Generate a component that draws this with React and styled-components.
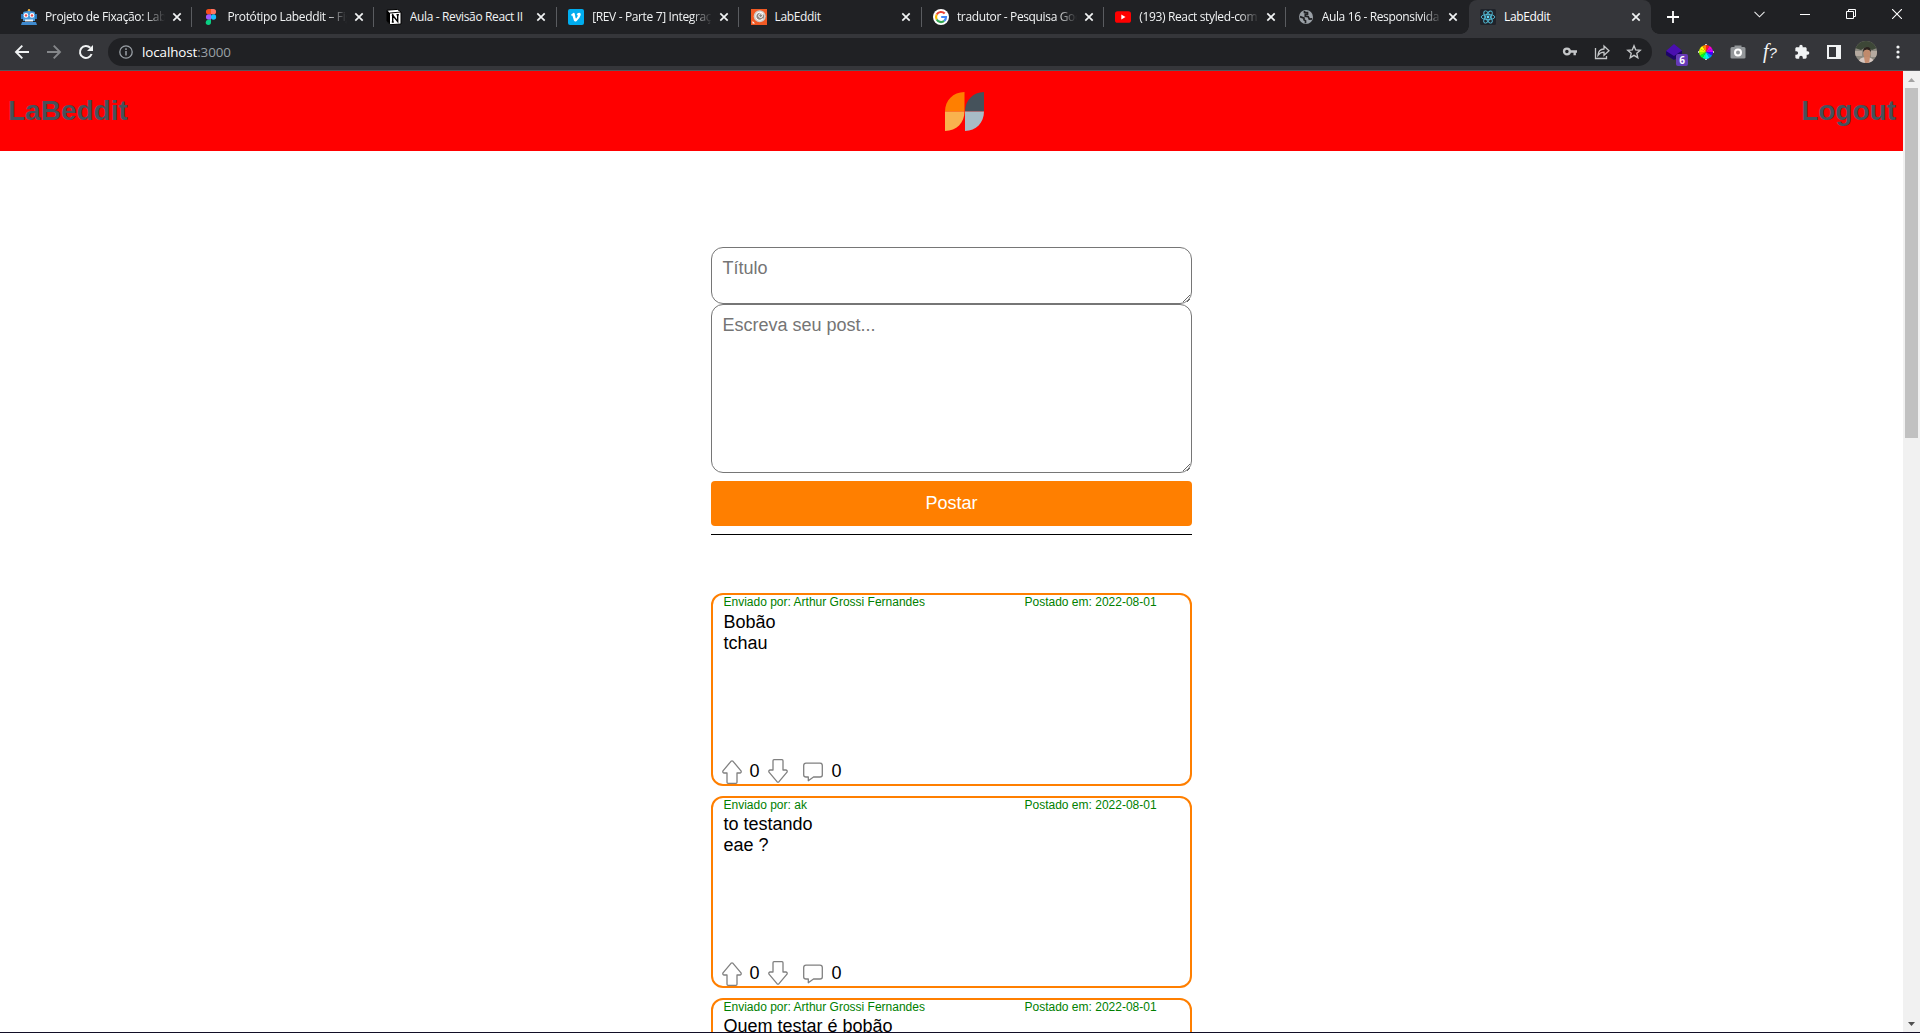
import React from "react";
import styled, { createGlobalStyle } from "styled-components";

const GlobalStyle = createGlobalStyle`
  * { box-sizing: border-box; }
  html, body { margin: 0; padding: 0; overflow: hidden; background: #fff; }
  body { font-family: Arial, "Liberation Sans", sans-serif; color: #000; }
  svg { display: block; flex: none; }
`;

const Window = styled.div`
  display: flex;
  flex-direction: column;
  width: 1920px;
  height: 1033px;
  overflow: hidden;
  border-bottom: 1px solid #120e26;
`;

/* ---------- browser chrome ---------- */

const TabStrip = styled.div`
  display: flex;
  flex: none;
  height: 34px;
  padding-left: 9.6px;
  background: #202124;
  font-family: "Segoe UI", "Open Sans", sans-serif;
`;

const Tab = styled.div`
  display: flex;
  align-items: center;
  position: relative;
  width: 182.4px;
  height: 34px;
  padding: 0 10.4px 0 11.4px;
  color: ${(p) => (p.$active ? "#fff" : "#f1f3f4")};
  background: ${(p) => (p.$active ? "#35363a" : "transparent")};
  border-radius: 8px 8px 0 0;
  &::before, &::after {
    content: "";
    display: ${(p) => (p.$active ? "block" : "none")};
    position: absolute;
    bottom: 0;
    width: 8px;
    height: 8px;
  }
  &::before { left: -8px; background: radial-gradient(circle at 0 0, #202124 7.5px, #35363a 8px); }
  &::after { right: -8px; background: radial-gradient(circle at 100% 0, #202124 7.5px, #35363a 8px); }
`;

const Divider = styled.i`
  position: absolute;
  right: 0;
  top: 7px;
  width: 1px;
  height: 20px;
  background: #5a5c60;
`;

const TabTitle = styled.span`
  width: 120px;
  margin-left: 8px;
  overflow: hidden;
  white-space: nowrap;
  font-size: 12px;
  line-height: 18px;
  letter-spacing: -0.36px;
  mask-image: ${(p) => (p.$fade ? "linear-gradient(to right, #000 100px, transparent 120px)" : "none")};
`;

const TabClose = styled.span`
  display: flex;
  margin-left: auto;
`;

const NewTab = styled.div`
  display: flex;
  align-items: center;
  margin-left: 15.5px;
`;

const WindowButtons = styled.div`
  display: flex;
  height: 28px;
  margin-left: auto;
`;

const WindowButton = styled.div`
  display: flex;
  align-items: center;
  justify-content: center;
  width: 46px;
`;

const Toolbar = styled.div`
  display: flex;
  align-items: center;
  flex: none;
  height: 37px;
  padding: 0 0 1px 14px;
  background: #35363a;
  border-bottom: 1px solid #55585c;
  font-family: "Segoe UI", "Open Sans", sans-serif;
`;

const NavButtons = styled.div`
  display: flex;
  width: 94px;
  gap: 16px;
`;

const AddressBar = styled.div`
  display: flex;
  align-items: center;
  width: 1544px;
  height: 28px;
  padding: 0 10px 0 11px;
  background: #202124;
  border-radius: 14px;
`;

const Address = styled.span`
  margin-left: 9px;
  font-size: 13.4px;
  line-height: 20px;
  letter-spacing: -0.1px;
  color: #fff;
  em { font-style: normal; color: #9aa0a6; }
`;

const AddressActions = styled.div`
  display: flex;
  gap: 16px;
  margin-left: auto;
`;

const Extensions = styled.div`
  display: flex;
  align-items: center;
  margin-left: 6px;
`;

const Extension = styled.div`
  display: flex;
  align-items: center;
  justify-content: center;
  position: relative;
  width: 32px;
  height: 28px;
`;

const Badge = styled.span`
  position: absolute;
  left: 18px;
  top: 16px;
  width: 12px;
  height: 12px;
  border-radius: 2px;
  background: #673ab7;
  color: #fff;
  font-size: 10px;
  font-weight: 700;
  line-height: 12px;
  text-align: center;
`;

const FnMark = styled.span`
  font-family: "Liberation Serif", serif;
  font-style: italic;
  font-size: 20px;
  line-height: 20px;
  color: #f1f3f4;
  b { font-family: "Liberation Sans", sans-serif; font-size: 15px; font-weight: 400; }
`;

/* ---------- page ---------- */

const Viewport = styled.div`
  display: flex;
  flex: 1;
  min-height: 0;
`;

const Page = styled.main`
  display: flex;
  flex-direction: column;
  align-items: center;
  width: 1903px;
  overflow: hidden;
  background: #fff;
`;

const Header = styled.header`
  display: grid;
  grid-template-columns: 1fr auto 1fr;
  align-items: center;
  flex: none;
  width: 100%;
  height: 80px;
  padding: 0 7px 0 8px;
  background: #ff0000;
`;

const HeaderTitle = styled.h1`
  margin: 0;
  font-size: 28px;
  line-height: 32px;
  color: #45525b;
  text-align: ${(p) => p.$align || "left"};
`;

const LogoBox = styled.div`
  padding: 1px 0 0 25px;
`;

const Feed = styled.div`
  display: flex;
  flex-direction: column;
  flex: none;
  width: 481px;
  padding-top: 96px;
`;

const Field = styled.textarea`
  display: block;
  width: 100%;
  height: ${(p) => p.$height}px;
  margin: 0;
  padding: 10px 10px 10px 10.5px;
  border: 1px solid #767676;
  border-radius: 12px;
  font: 18px/20px Arial, "Liberation Sans", sans-serif;
  background: #fff;
  &::placeholder { color: #757575; }
`;

const PostButton = styled.button`
  height: 45px;
  margin: 8px 0;
  padding: 0 0 1px;
  border: 0;
  border-radius: 4px;
  background: #ff7f00;
  color: #fff;
  font: 18px/21px Arial, "Liberation Sans", sans-serif;
`;

const Rule = styled.hr`
  width: 100%;
  height: 1px;
  margin: 0 0 58.2px;
  border: 0;
  background: #000;
`;

const Card = styled.article`
  display: flex;
  flex-direction: column;
  height: 192.4px;
  margin-bottom: 10px;
  padding: 0 10px 0 10.5px;
  border: 2px solid #ff7f00;
  border-radius: 12px;
`;

const Meta = styled.div`
  display: flex;
  font-size: 12px;
  line-height: 14px;
  color: #008000;
`;

const Sender = styled.span`
  width: 301px;
`;

const Text = styled.p`
  margin: 0;
  font-size: 18px;
  line-height: 21px;
`;

const Title = styled(Text)`
  margin-top: 2.4px;
`;

const Actions = styled.div`
  display: flex;
  align-items: flex-end;
  height: 24px;
  margin: auto 0 0 -2px;
`;

const Count = styled.span`
  width: ${(p) => p.$width}px;
  padding-left: ${(p) => p.$indent}px;
  font-size: 18px;
  line-height: 22px;
  margin-bottom: 2px;
`;

const IconSlot = styled.span`
  margin-bottom: ${(p) => p.$lift || 0}px;
`;

const Scrollbar = styled.div`
  display: flex;
  flex-direction: column;
  align-items: center;
  width: 17px;
  background: #f1f1f1;
`;

const ScrollArrow = styled.div`
  display: flex;
  align-items: center;
  justify-content: center;
  height: 17px;
  margin-top: ${(p) => (p.$end ? "auto" : 0)};
`;

const Thumb = styled.div`
  width: 13px;
  height: 350px;
  background: #c1c1c1;
`;

/* ---------- icons ---------- */

const favicons = {
  robot: (
    <svg width="16" height="16" viewBox="0 0 16 16">
      <circle cx="8" cy="1.2" r="1.2" fill="#f6b73c" />
      <path d="M2 3.5Q3 2 8 2T14 3.5V12H2Z" fill="#4a9bdc" />
      <path d="M0 5h2v5H0ZM14 5h2v5h-2Z" fill="#2b78ba" />
      <circle cx="5" cy="6.4" r="2.3" fill="#fff" /><circle cx="11" cy="6.4" r="2.3" fill="#fff" />
      <circle cx="5" cy="6.4" r="1.2" fill="#e84a4a" /><circle cx="11" cy="6.4" r="1.2" fill="#e84a4a" />
      <path d="M4 10.5h8v2H4Z" fill="#e8f2fa" /><path d="M1 13h14l1 3H0Z" fill="#3f8bd0" />
    </svg>
  ),
  figma: (
    <svg width="16" height="16" viewBox="0 0 16 16">
      <path d="M8 0v5.33H5.6a2.66 2.66 0 0 1 0-5.33Z" fill="#f24e1e" />
      <path d="M8 0h2.4a2.66 2.66 0 0 1 0 5.33H8Z" fill="#ff7262" />
      <path d="M8 5.33v5.34H5.6a2.66 2.66 0 0 1 0-5.34Z" fill="#a259ff" />
      <circle cx="10.5" cy="8" r="2.66" fill="#1abcfe" />
      <path d="M5.6 10.67H8v2.6a2.66 2.66 0 1 1-2.4-2.6Z" fill="#0acf83" />
    </svg>
  ),
  notion: (
    <svg width="16" height="16" viewBox="0 0 16 16">
      <path d="M1 1.2 11.5.4 15 3v12l-11 .7L1 12Z" fill="#fff" stroke="#000" />
      <path d="M1 1.2 4 4v11.7L1 12Z" fill="#000" /><path d="M4 4 15 3" stroke="#000" />
      <path d="M6.7 13V6.3l5 6.2V5.7M5.8 6.2h2M10.5 5.7h2.4M5.8 13h2" fill="none" stroke="#000" strokeWidth="1.4" />
    </svg>
  ),
  vimeo: (
    <svg width="16" height="16" viewBox="0 0 16 16">
      <rect width="16" height="16" rx="2" fill="#00adef" />
      <path d="M3 5.8 5.2 4q1.2-.7 1.6 1.1L7.6 9q.4 1 1.2-.2 1.6-2.4.7-2.9-.4-.2-1 .1Q9.3 3.6 11.3 3.7q2 .1 1.4 2.4-.8 3.2-4.3 6.1-1.6 1.1-2.5-.7L4.6 7.2q-.3-1-1.1-.4Z" fill="#fff" />
    </svg>
  ),
  lab: (
    <svg width="16" height="16" viewBox="0 0 16 16">
      <rect width="16" height="16" fill="#f15a24" />
      <circle cx="8.7" cy="7.2" r="6" fill="#cfcbc8" />
      <circle cx="8.7" cy="7.2" r="4.3" fill="#8d8682" />
      <path d="M12.300 5.400A4 4 0 1 0 12 9.600" fill="none" stroke="#fff" strokeWidth="1.100" />
      <circle cx="9.600" cy="6.600" r="1.900" fill="#8d8682" stroke="#fff" />
      <path d="M1.500 12v2.500H4Z" fill="#fff" />
    </svg>
  ),
  google: (
    <svg width="16" height="16" viewBox="0 0 16 16">
      <circle cx="8" cy="8" r="8" fill="#fff" />
      <g fill="none" strokeWidth="2.2">
        <path d="M11.7 4.6A5 5 0 0 0 3.7 5.5" stroke="#ea4335" />
        <path d="M3.7 5.5A5 5 0 0 0 3.7 10.5" stroke="#fbbc05" />
        <path d="M3.7 10.5A5 5 0 0 0 11.2 11.9" stroke="#34a853" />
        <path d="M11.2 11.9A5 5 0 0 0 13 8H8.2" stroke="#4285f4" />
      </g>
    </svg>
  ),
  youtube: (
    <svg width="16" height="16" viewBox="0 0 16 16">
      <rect y="2.2" width="16" height="11.6" rx="2.6" fill="#f00" />
      <path d="M6.3 5.5 10.5 8l-4.2 2.5Z" fill="#fff" />
    </svg>
  ),
  globe: (
    <svg width="16" height="16" viewBox="0 0 16 16">
      <circle cx="8" cy="8" r="7" fill="#9aa0a6" />
      <path d="M2 7.600 6 9.200v1.500l1.500 1v2.500M6.500 2v1.500h3v1.800H7.300v2l3 .4 1 2.300 2.700-.2" fill="none" stroke="#202124" strokeWidth="1.700" />
    </svg>
  ),
  react: (
    <svg width="16" height="16" viewBox="0 0 16 16">
      <rect width="16" height="16" rx="1.5" fill="#20232a" />
      <circle cx="8" cy="8" r="1.4" fill="#61dafb" />
      <g fill="none" stroke="#53bdd8" strokeWidth="0.9">
        <ellipse cx="8" cy="8" rx="6.8" ry="2.6" />
        <ellipse cx="8" cy="8" rx="6.8" ry="2.6" transform="rotate(60 8 8)" />
        <ellipse cx="8" cy="8" rx="6.8" ry="2.6" transform="rotate(120 8 8)" />
      </g>
    </svg>
  ),
};

const CloseIcon = () => (
  <svg width="10" height="10" viewBox="0 0 10 10">
    <path d="m1.3 1.3 7.4 7.4M8.7 1.3 1.3 8.7" stroke="#f1f3f4" strokeWidth="1.7" />
  </svg>
);

const NavIcon = ({ color = "#f1f3f4", d }) => (
  <svg width="16" height="16" viewBox="0 0 16 16" fill="none" stroke={color} strokeWidth="1.9">
    <path d={d} />
  </svg>
);

const wheelColors = ["#ff0", "#f80", "#f02020", "#f0c", "#c0f", "#40f", "#08f", "#0ef", "#0fa", "#0f2", "#8f0", "#df0"];

const ColorWheel = () => (
  <svg width="16" height="16" viewBox="0 0 16 16">
    {wheelColors.map((color, i) => (
      <path key={i} d="M8 8V1A7 7 0 0 1 11.500 1.940Z" fill={color} transform={`rotate(${i * 30 - 60} 8 8)`} />
    ))}
    <path d="M7 .500h2M7 15.500h2M.500 7v2M15.500 7v2" stroke="#c8c8c8" />
  </svg>
);

const Logo = () => (
  <svg width="39" height="39" viewBox="0 0 39 39">
    <path d="M0 19.500C0 8.500 8 0 19.500 0v19.500Z" fill="#ff7f00" />
    <path d="M20 19.500C20 8.500 28 0 39 0v19.500Z" fill="#45525b" />
    <path d="M0 19.500h19.500C19.500 30.500 11.500 39 0 39Z" fill="#f9b24e" />
    <path d="M20 19.500h19C39 30.500 31 39 20 39Z" fill="#a8bbc6" />
  </svg>
);

const VoteIcon = ({ down }) => (
  <svg width="20" height="24" viewBox="0 0 20 24" fill="none" stroke="#808080" strokeWidth="1.3" strokeLinejoin="round">
    <path
      d="M9 1.3Q10 .5 11 1.3L19 10.8Q19.700 12.600 18 13H15V22.300Q15 23.300 14 23.300H6Q5 23.300 5 22.300V13H2Q.300 12.600 1 10.800Z"
      transform={down ? "rotate(180 10 12)" : undefined}
    />
  </svg>
);

const CommentIcon = () => (
  <svg width="20" height="20" viewBox="0 0 20 20" fill="none" stroke="#808080" strokeWidth="1.3" strokeLinejoin="round">
    <path d="M3 1.2H17Q19.300 1.200 19.300 3.500V13Q19.300 15 17 15H10.500L5.300 18.700V15H3Q.700 15 .700 13V3.500Q.700 1.200 3 1.200Z" />
  </svg>
);

const Avatar = () => (
  <svg width="22" height="22" viewBox="0 0 22 22">
    <clipPath id="avatarClip"><circle cx="11" cy="11" r="11" /></clipPath>
    <g clipPath="url(#avatarClip)">
      <rect width="22" height="22" fill="#8c8980" />
      <path d="M0 0h22v7l-5 2-6-3-5 3-6-2Z" fill="#3d4737" />
      <path d="M0 10h7v5H0ZM16 10h6v6h-6Z" fill="#b5aaa0" />
      <path d="M3 22q1-6 8-6t9 6Z" fill="#d6c8c2" />
      <ellipse cx="12" cy="12.500" rx="3.600" ry="5" fill="#c08a6c" />
      <path d="M8 11q0-5 4-5t4 5q-1-2.500-4-2.500T8 11Z" fill="#2a211d" />
      <path d="M9 16h6l-1 6h-4Z" fill="#c58d70" />
    </g>
  </svg>
);

/* ---------- data ---------- */

const tabs = [
  { icon: "robot", title: "Projeto de Fixação: LabE", fade: true },
  { icon: "figma", title: "Protótipo Labeddit – Fig", fade: true },
  { icon: "notion", title: "Aula - Revisão React II" },
  { icon: "vimeo", title: "[REV - Parte 7] Integraç", fade: true },
  { icon: "lab", title: "LabEddit" },
  { icon: "google", title: "tradutor - Pesquisa Goo", fade: true },
  { icon: "youtube", title: "(193) React styled-com", fade: true },
  { icon: "globe", title: "Aula 16 - Responsivida", fade: true },
  { icon: "react", title: "LabEddit", active: true },
];

const posts = [
  { sender: "Arthur Grossi Fernandes", title: "Bobão", body: "tchau" },
  { sender: "ak", title: "to testando", body: "eae ?" },
  { sender: "Arthur Grossi Fernandes", title: "Quem testar é bobão", body: "" },
];

function BrowserTabs() {
  return (
    <TabStrip>
      {tabs.map((tab, i) => (
        <Tab key={i} $active={tab.active}>
          {favicons[tab.icon]}
          <TabTitle $fade={tab.fade}>{tab.title}</TabTitle>
          <TabClose><CloseIcon /></TabClose>
          {i < 7 && <Divider />}
        </Tab>
      ))}
      <NewTab>
        <svg width="12" height="12" viewBox="0 0 12 12"><path d="M6 0v12M0 6h12" stroke="#fff" strokeWidth="1.8" /></svg>
      </NewTab>
      <WindowButtons>
        <WindowButton><svg width="11" height="7" viewBox="0 0 11 7"><path d="m.5.8 5 5 5-5" fill="none" stroke="#e8e9ea" strokeWidth="1.100" /></svg></WindowButton>
        <WindowButton><svg width="10" height="1"><path d="M0 .5h10" stroke="#fff" /></svg></WindowButton>
        <WindowButton><svg width="10" height="10" viewBox="0 0 10 10"><path d="M.5 2.5h7v7h-7ZM2.5 2.5v-2h7v7h-2" fill="none" stroke="#fff" /></svg></WindowButton>
        <WindowButton><svg width="10" height="10" viewBox="0 0 10 10"><path d="m0 0 10 10M10 0 0 10" stroke="#fff" strokeWidth="1.1" /></svg></WindowButton>
      </WindowButtons>
    </TabStrip>
  );
}

function BrowserToolbar() {
  return (
    <Toolbar>
      <NavButtons>
        <NavIcon d="M15 8H2M8.3 1.7 2 8l6.3 6.3" />
        <NavIcon color="#85878a" d="M1 8h13M7.7 1.7 14 8l-6.3 6.3" />
        <svg width="16" height="16" viewBox="0 0 16 16">
          <path d="M13.6 10A6 6 0 1 1 12.3 3.8" fill="none" stroke="#f1f3f4" strokeWidth="2" />
          <path d="M15 1v6H9Z" fill="#f1f3f4" />
        </svg>
      </NavButtons>
      <AddressBar>
        <svg width="14" height="14" viewBox="0 0 14 14">
          <circle cx="7" cy="7" r="6.2" fill="none" stroke="#9aa0a6" strokeWidth="1.3" />
          <path d="M7 6v4.5M7 3.3v1.6" stroke="#9aa0a6" strokeWidth="1.5" />
        </svg>
        <Address>localhost<em>:3000</em></Address>
        <AddressActions>
          <svg width="16" height="16" viewBox="0 0 16 16" fill="none" stroke="#c4c6c8">
            <circle cx="4.9" cy="7.5" r="2.900" strokeWidth="2.300" />
            <path d="M8 7.5h7M12.7 7v4.3" strokeWidth="2.4" />
          </svg>
          <svg width="16" height="16" viewBox="0 0 16 16" fill="none" stroke="#c4c6c8" strokeWidth="1.3">
            <path d="M1.5 4v10.5h11V12" />
            <path d="M4 11.3Q4.3 5.3 10 5V2l5 4.8-5 4.5V8.2Q6 8.3 4 11.3Z" />
          </svg>
          <svg width="16" height="16" viewBox="0 0 16 16" fill="none" stroke="#c4c6c8" strokeWidth="1.4">
            <path d="m8 1.8 1.7 4.1 4.5.4-3.4 3 1 4.4L8 11.4l-3.800 2.300 1-4.400-3.400-3 4.500-.4Z" />
          </svg>
        </AddressActions>
      </AddressBar>
      <Extensions>
        <Extension>
          <svg width="16" height="16" viewBox="0 0 16 16">
            <path d="M0 7v4l8 5 8-5V7Z" fill="#1d0566" /><path d="m8 0 8 6.5L8 12 0 7Z" fill="#4a0fb0" />
          </svg>
          <Badge>6</Badge>
        </Extension>
        <Extension><ColorWheel /></Extension>
        <Extension>
          <svg width="16" height="16" viewBox="0 0 16 16">
            <path d="M2 3h2.5V1.5h7V3H14q1.5 0 1.5 1.5v9q0 1-1.5 1H2q-1.500 0-1.500-1v-9Q.500 3 2 3Z" fill="#94979a" />
            <circle cx="8" cy="8.5" r="3" fill="#94979a" stroke="#fff" strokeWidth="2" />
          </svg>
        </Extension>
        <Extension><FnMark>f<b>?</b></FnMark></Extension>
        <Extension>
          <svg width="16" height="16" viewBox="0 0 24 24" fill="#f1f3f4">
            <path d="M20.5 11H19V7c0-1.100-.9-2-2-2h-4V3.500a2.500 2.500 0 0 0-5 0V5H4c-1.100 0-2 .9-2 2v3.800h1.500a2.700 2.700 0 0 1 0 5.400H2V20c0 1.100.9 2 2 2h3.800v-1.500a2.700 2.700 0 0 1 5.400 0V22H17c1.100 0 2-.9 2-2v-4h1.500a2.500 2.500 0 0 0 0-5Z" />
          </svg>
        </Extension>
        <Extension>
          <svg width="14" height="14" viewBox="0 0 14 14"><path d="M0 0h14v14H0ZM2 2v10h7V2Z" fillRule="evenodd" fill="#f1f3f4" /></svg>
        </Extension>
        <Extension><Avatar /></Extension>
        <Extension>
          <svg width="4" height="14" viewBox="0 0 4 14" fill="#f1f3f4">
            <circle cx="2" cy="2" r="1.6" /><circle cx="2" cy="7" r="1.6" /><circle cx="2" cy="12" r="1.6" />
          </svg>
        </Extension>
      </Extensions>
    </Toolbar>
  );
}

function Post({ post }) {
  return (
    <Card>
      <Meta>
        <Sender>Enviado por: {post.sender}</Sender>
        <span>Postado em: 2022-08-01</span>
      </Meta>
      <Title>{post.title}</Title>
      <Text>{post.body}</Text>
      <Actions>
        <VoteIcon />
        <Count $width={26} $indent={8}>0</Count>
        <IconSlot $lift={0.6}><VoteIcon down /></IconSlot>
        <Count $width={15} $indent={0} />
        <IconSlot $lift={2}><CommentIcon /></IconSlot>
        <Count $width={20} $indent={9}>0</Count>
      </Actions>
    </Card>
  );
}

export default function App() {
  return (
    <Window>
      <GlobalStyle />
      <BrowserTabs />
      <BrowserToolbar />
      <Viewport>
        <Page>
          <Header>
            <HeaderTitle>LaBeddit</HeaderTitle>
            <LogoBox><Logo /></LogoBox>
            <HeaderTitle $align="right">Logout</HeaderTitle>
          </Header>
          <Feed>
            <Field $height={57} placeholder="Título" />
            <Field $height={169} placeholder="Escreva seu post..." />
            <PostButton>Postar</PostButton>
            <Rule />
            {posts.map((post, i) => <Post key={i} post={post} />)}
          </Feed>
        </Page>
        <Scrollbar>
          <ScrollArrow><svg width="7" height="4"><path d="M0 4 3.5 0 7 4Z" fill="#a3a3a3" /></svg></ScrollArrow>
          <Thumb />
          <ScrollArrow $end><svg width="7" height="4"><path d="M0 0h7L3.5 4Z" fill="#505050" /></svg></ScrollArrow>
        </Scrollbar>
      </Viewport>
    </Window>
  );
}
